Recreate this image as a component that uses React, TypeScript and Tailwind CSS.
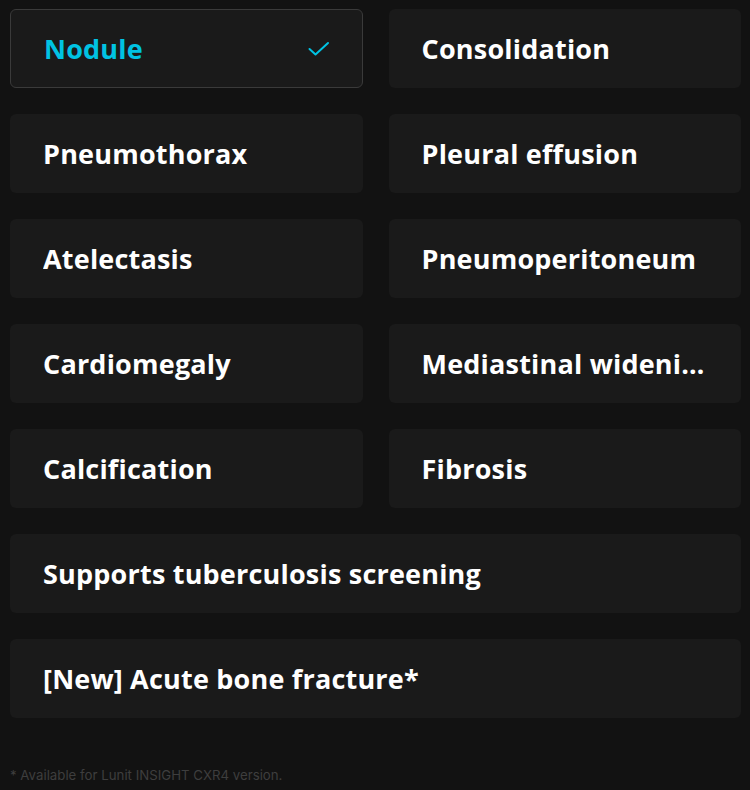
import React from "react";

const items: { label: string; full?: boolean; selected?: boolean }[] = [
  { label: "Nodule", selected: true },
  { label: "Consolidation" },
  { label: "Pneumothorax" },
  { label: "Pleural effusion" },
  { label: "Atelectasis" },
  { label: "Pneumoperitoneum" },
  { label: "Cardiomegaly" },
  { label: "Mediastinal widening" },
  { label: "Calcification" },
  { label: "Fibrosis" },
  { label: "Supports tuberculosis screening", full: true },
  { label: "[New] Acute bone fracture*", full: true },
];

export default function App() {
  return (
    <div
      className="w-[750px] h-[790px] bg-[#121212] overflow-hidden"
      style={{ fontFamily: '"Open Sans", "Noto Sans", sans-serif' }}
    >
      <div className="pl-[10px] pr-[9px] pt-[9px] grid grid-cols-2 gap-x-[26px] gap-y-[26px]">
        {items.map((it) => (
          <div
            key={it.label}
            className={
              "h-[79px] rounded-[6px] flex items-center pl-[33px] pr-[31px] " +
              (it.full ? "col-span-2 " : "") +
              (it.selected
                ? "bg-[#1a1a1a] border border-[#3a3a3a]"
                : "bg-[#1a1a1a]")
            }
          >
            <span
              className={
                "flex-1 min-w-0 truncate text-[27px] leading-[40px] pt-[1px] font-bold tracking-[0.2px] " +
                (it.selected ? "text-[#00c3e3]" : "text-white")
              }
            >
              {it.label}
            </span>
            {it.selected && (
              <svg width="22" height="16" viewBox="0 0 22 16" className="shrink-0 mr-[1px]">
                <path
                  d="M1.5 8 L7.5 13.5 L20 2"
                  fill="none"
                  stroke="#00c3e3"
                  strokeWidth="2"
                  strokeLinecap="round"
                  strokeLinejoin="round"
                />
              </svg>
            )}
          </div>
        ))}
      </div>
      <div
        className="pl-[10px] mt-[48px] text-[13.25px] text-[#3e3e3e]"
        style={{ fontFamily: 'Inter, "Liberation Sans", sans-serif' }}
      >
        * Available for Lunit INSIGHT CXR4 version.
      </div>
    </div>
  );
}
